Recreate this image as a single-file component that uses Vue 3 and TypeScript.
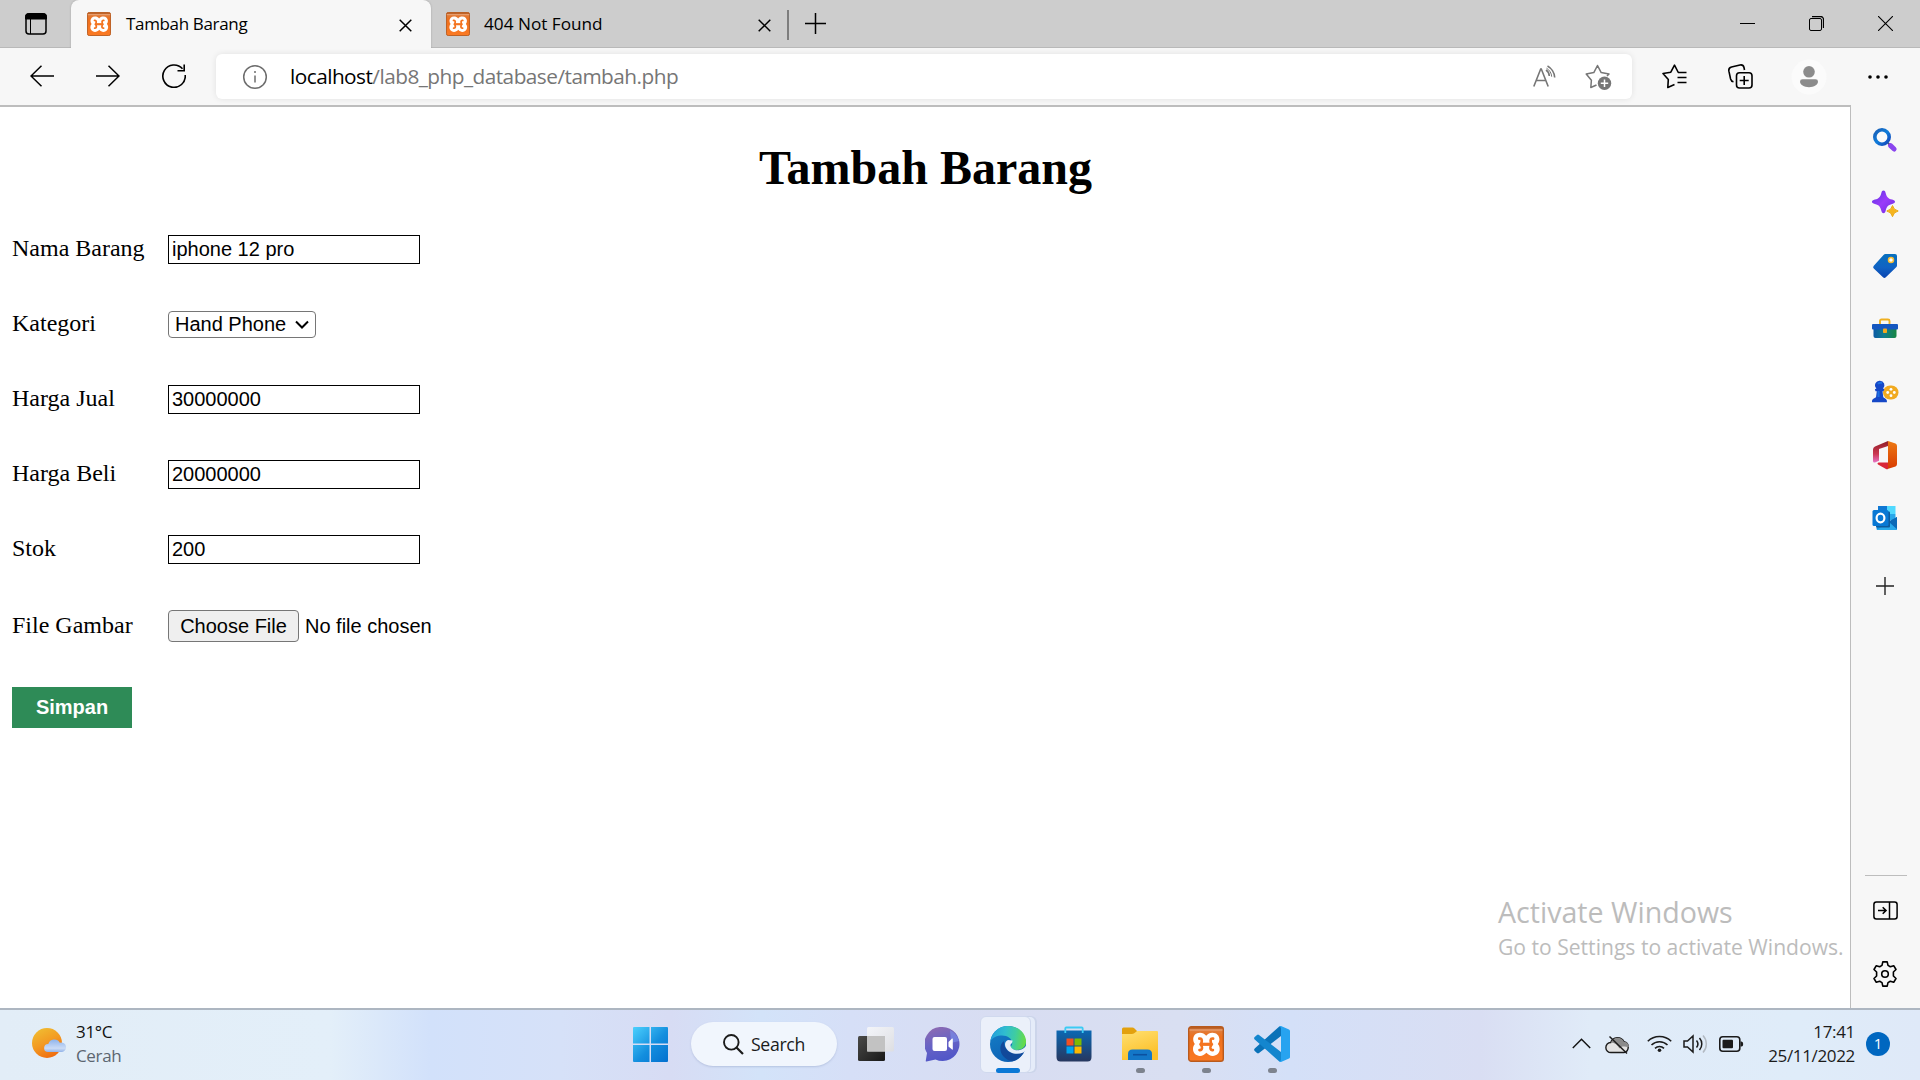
<script setup lang="ts">
import { ref } from 'vue'

interface Field {
  label: string
  value: string
}

const nama = ref<Field>({ label: 'Nama Barang', value: 'iphone 12 pro' })
const numeric = ref<Field[]>([
  { label: 'Harga Jual', value: '30000000' },
  { label: 'Harga Beli', value: '20000000' },
  { label: 'Stok', value: '200' },
])
const kategori = ref('Hand Phone')
</script>

<template>
  <div class="screen">
    <svg class="defs" width="0" height="0" aria-hidden="true">
      <defs>
        <linearGradient id="xo" x1="0" y1="0" x2="0" y2="1">
          <stop offset="0" stop-color="#b3591f" /><stop offset=".06" stop-color="#c4682d" />
          <stop offset=".09" stop-color="#e9a173" /><stop offset=".14" stop-color="#e27a35" />
          <stop offset=".3" stop-color="#ee6f1c" /><stop offset="1" stop-color="#fb7a24" />
        </linearGradient>
        <symbol id="xampp" viewBox="0 0 36 36">
          <rect x=".7" y=".7" width="34.6" height="34.6" rx="2.6" fill="url(#xo)" stroke="#b95a1d" stroke-width="1.4" />
          <path d="M12 6.7c2.7 0 4.5.9 6.2 3 1.700-2.100 3.500-3 6.200-3 4.200 0 7 2.800 7 6.600 0 1.800-.5 3.400-1.600 4.800 1.300 1.400 1.900 3 1.900 4.900 0 3.900-3 6.900-6.900 6.900-2.600 0-4.600-1-6.400-3.100-1.900 2.100-3.800 3.100-6.500 3.100-3.900 0-6.900-3-6.900-6.900 0-1.900.6-3.500 1.900-4.900-1.200-1.400-1.700-3-1.700-4.800 0-3.800 2.700-6.600 6.800-6.600z" fill="#fff" />
          <path d="M11.300 12.600q2.300-.6 2.500 2.200.1 2.500-1.300 3.500 1.600 1 1.500 3.600-.2 2.600-2.500 2.200M25.100 12.600q-2.300-.6-2.500 2.200-.1 2.500 1.300 3.500-1.600 1-1.500 3.600.2 2.600 2.500 2.200" fill="none" stroke="#f47420" stroke-width="2.700" stroke-linecap="round" stroke-linejoin="round" />
          <path d="M12.500 18.300h11.500" stroke="#f47420" stroke-width="3.200" />
        </symbol>
      </defs>
    </svg>

    <header class="tabs">
      <div class="workspace">
        <svg width="22" height="22" viewBox="0 0 22 22"><rect x="1" y="1" width="20" height="20" rx="3" fill="none" stroke="#000" stroke-width="1.500" /><path d="M.5 6V3.500a3 3 0 0 1 3-3h15a3 3 0 0 1 3 3V6zM5.500 6v15" stroke="#000" stroke-width="1" /></svg>
      </div>
      <div class="tab active">
        <svg class="favicon" width="24" height="24"><use href="#xampp" /></svg>
        <span class="ui tabtext">Tambah Barang</span>
        <svg class="x" width="13" height="13" viewBox="0 0 13 13"><path d="M.7.7l11.600 11.600M12.300.7L.7 12.300" stroke="#000" stroke-width="1.500" /></svg>
      </div>
      <div class="tab">
        <svg class="favicon" width="24" height="24"><use href="#xampp" /></svg>
        <span class="ui tabtext second">404 Not Found</span>
        <svg class="x" width="13" height="13" viewBox="0 0 13 13"><path d="M.7.7l11.600 11.600M12.300.7L.7 12.300" stroke="#000" stroke-width="1.500" /></svg>
      </div>
      <i class="sep"></i>
      <svg class="newtab" width="21" height="21" viewBox="0 0 21 21"><path d="M10.500 0v21M0 10.500h21" stroke="#000" stroke-width="1.500" /></svg>
      <div class="winctl">
        <svg width="15" height="15" viewBox="0 0 15 15"><path d="M0 7.500h15" stroke="#000" /></svg>
        <svg width="15" height="15" viewBox="0 0 15 15" fill="none" stroke="#000"><rect x=".5" y="2.500" width="12" height="12" rx="1.500" /><path d="M3 .5h8.500a3 3 0 0 1 3 3V12" stroke-width="1.300" /></svg>
        <svg width="15" height="15" viewBox="0 0 15 15"><path d="M0 0l15 15M15 0L0 15" stroke="#000" stroke-width="1.100" /></svg>
      </div>
    </header>

    <nav class="toolbar">
      <div class="navs">
        <svg width="24" height="22" viewBox="0 0 24 22" fill="none" stroke="#000" stroke-width="1.500"><path d="M24 11H1M11.500.8L1 11l10.500 10.200" /></svg>
        <svg width="24" height="22" viewBox="0 0 24 22" fill="none" stroke="#000" stroke-width="1.500"><path d="M0 11h23M12.500.8L23 11 12.500 21.200" /></svg>
        <svg width="24" height="24" viewBox="0 0 24 24" fill="none" stroke="#000" stroke-width="1.600"><path d="M20.500 4.800A11.200 11.200 0 1 0 23.200 11M22.200.5V6.800H15.500" /></svg>
      </div>
      <div class="address">
        <svg width="26" height="26" viewBox="0 0 26 26" fill="none" stroke="#6d6d6d"><circle cx="13" cy="13" r="11.300" stroke-width="1.500" /><path d="M13 11.500v7" stroke-width="1.500" /><circle cx="13" cy="8" r="1" fill="#6d6d6d" stroke="none" /></svg>
        <span class="ui url"><b>localhost</b>/lab8_php_database/tambah.php</span>
        <svg class="read" width="24" height="23" viewBox="0 0 24 23" fill="none" stroke="#767676" stroke-width="1.600"><path d="M.8 21.500L7.700 4h.6l6.900 17.500M3.300 15.500h9.600M13 5c2 1.300 3.200 3.500 3.300 6M14.500 1c3.800 2.100 7 6.800 7.200 11.500" /><path d="M13.500 3.200c3 1.800 5 4.800 5.200 8.500" stroke-width="1" /></svg>
        <svg class="addfav" width="27" height="27" viewBox="0 0 27 27"><path d="M11.500 21L5.800 23.500 6.400 16.300 1.200 10 8.800 8.600 12.500 1.500 16.200 8.600 24 10 22 12" fill="none" stroke="#767676" stroke-width="1.500" stroke-linejoin="round" /><circle cx="19.500" cy="19.200" r="6.700" fill="#767676" /><path d="M19.500 15.500v7.400M15.800 19.200h7.400" stroke="#fff" stroke-width="1.500" /></svg>
      </div>
      <svg class="fav" width="25" height="25" viewBox="0 0 25 25" fill="none" stroke="#000" stroke-width="1.600" stroke-linejoin="round"><path d="M12.500 20.500L5.800 23.500 6.300 15.600 1 9.500 8.800 8.200 12.500 1.200 16.300 8.500H24.500M15.500 13.500h9M15.500 18.500h9" /></svg>
      <svg class="coll" width="25" height="25" viewBox="0 0 25 25" fill="none" stroke="#000" stroke-width="1.600"><rect x="8.500" y="8.800" width="15.500" height="15.200" rx="3" /><path d="M16.200 12v9M11.700 16.500h9M5.500 17.800C3.500 17.500 3 16.500 2.600 15L.9 7.200C.5 5 1.500 3.500 3.500 3L12 1c2-.4 3.500.5 4 2.500L16.500 6" /></svg>
      <svg class="profile" width="36" height="36" viewBox="0 0 36 36"><circle cx="18" cy="18" r="17.500" fill="#fbfbfb" /><circle cx="18" cy="12.800" r="5.800" fill="#8b8b8b" /><path d="M11.500 20.300h13q2.500 0 2.500 2.300c0 3.300-4 5.600-9 5.600s-9-2.300-9-5.600q0-2.300 2.500-2.300z" fill="#8b8b8b" /></svg>
      <svg class="more" width="20" height="4" viewBox="0 0 20 4"><circle cx="2" cy="2" r="1.800" /><circle cx="10" cy="2" r="1.800" /><circle cx="18" cy="2" r="1.800" /></svg>
    </nav>

    <section class="middle">
      <main class="page">
        <h1>Tambah Barang</h1>
        <form @submit.prevent>
          <div class="row"><label>{{ nama.label }}</label><input v-model="nama.value" type="text" /></div>
          <div class="row">
            <label>Kategori</label>
            <button type="button" class="select">{{ kategori }}<svg width="14" height="9" viewBox="0 0 14 9"><path d="M1 1.500l6 6 6-6" fill="none" stroke="#000" stroke-width="2" /></svg></button>
          </div>
          <div v-for="f in numeric" :key="f.label" class="row"><label>{{ f.label }}</label><input v-model="f.value" type="text" /></div>
          <div class="row filerow"><label>File Gambar</label><button type="button" class="choose">Choose File</button><span class="nofile">No file chosen</span></div>
          <button class="simpan">Simpan</button>
        </form>
        <div class="watermark ui">
          <p class="w1">Activate Windows</p>
          <p class="w2">Go to Settings to activate Windows.</p>
        </div>
      </main>

      <aside class="sidebar">
        <div class="cell">
          <svg width="26" height="26" viewBox="0 0 26 26"><defs><linearGradient id="s1" x2="1" y2="1"><stop stop-color="#1b5fb5" /><stop offset=".5" stop-color="#0f7ddb" /><stop offset="1" stop-color="#1544b8" /></linearGradient></defs><path d="M16 16l3 3" stroke="#555" stroke-width="2" /><path d="M18.500 18.700l3.600 3.300" stroke="#8a45ee" stroke-width="5" stroke-linecap="round" /><circle cx="10" cy="10" r="7.200" fill="#fafafa" stroke="url(#s1)" stroke-width="3.600" /></svg>
        </div>
        <div class="cell">
          <svg width="28" height="28" viewBox="0 0 28 28"><defs><linearGradient id="s2" x2="1" y2="1"><stop stop-color="#5a35e0" /><stop offset=".5" stop-color="#9a3bfa" /><stop offset="1" stop-color="#6b2ee0" /></linearGradient></defs><path d="M12.500 1.500c1.200 0 1.700.8 2.100 2.200 1.100 4.200 2.200 5.800 6.500 6.900 3.900 1 3.900 3.500 0 4.500-4.300 1.100-5.400 2.700-6.500 6.900-.8 3-3.400 3-4.200 0-1.100-4.200-2.200-5.800-6.500-6.900-3.900-1-3.900-3.500 0-4.500 4.300-1.100 5.400-2.700 6.500-6.900.4-1.400.9-2.200 2.100-2.200z" fill="url(#s2)" /><path d="M21.500 16.500q.9 4.500 5.700 5.500-4.800 1-5.700 5.700-.9-4.700-5.700-5.700 4.800-1 5.700-5.500z" fill="#f6b51d" stroke="#eba80e" stroke-width="1" stroke-linejoin="round" /></svg>
        </div>
        <div class="cell">
          <svg width="26" height="26" viewBox="0 0 26 26"><defs><linearGradient id="s3" x2="0" y2="1"><stop stop-color="#0870bd" /><stop offset=".55" stop-color="#1063c4" /><stop offset="1" stop-color="#0a44b0" /></linearGradient></defs><path d="M13.500 1H23q2 0 2 2v9.500q0 1-.8 1.800L13.800 24.300q-1.400 1.400-2.800 0L1.800 15.500q-1.400-1.400 0-2.800L11.500 2q.8-1 2-1z" fill="url(#s3)" /><circle cx="19" cy="7" r="2.500" fill="#fff" stroke="#f7bd32" stroke-width="1.500" /></svg>
        </div>
        <div class="cell">
          <svg width="28" height="22" viewBox="0 0 28 22"><defs><linearGradient id="s4" x2="1" y2="0"><stop stop-color="#0b5aa5" /><stop offset=".45" stop-color="#117d8e" /><stop offset="1" stop-color="#178640" /></linearGradient></defs><path d="M9 6V3q0-1.500 1.500-1.500h6.500Q18.500 1.500 18.500 3v3" fill="none" stroke="#f0b020" stroke-width="1.900" /><path d="M2.500 9h23v9q0 2-2 2h-19q-2 0-2-2z" fill="url(#s4)" /><rect x="1" y="6" width="26" height="5.500" rx="1" fill="#1557c0" /><rect x="12" y="10.500" width="4" height="4.500" rx=".8" fill="#f5a91c" /></svg>
        </div>
        <div class="cell">
          <svg width="28" height="24" viewBox="0 0 28 24"><rect x="12" y="5.500" width="15.500" height="14" rx="7" fill="#f1aa20" /><g fill="#fff"><circle cx="20" cy="9.300" r="1.400" /><circle cx="20" cy="15.700" r="1.400" /><circle cx="16.700" cy="12.500" r="1.400" /><circle cx="23.300" cy="12.500" r="1.400" /></g><path d="M9 .8a4.500 4.500 0 0 1 3.100 7.700l1.200.7-.8 2H11.500l.8 6 2.600 1.800q1 .8 1 2v1.300H1v-1.300q0-1.200 1-2l3-1.800.8-6H4.500l-.6-2 1.500-.7A4.500 4.500 0 0 1 9 .8z" fill="#1648c7" /><path d="M7 4q1.500-2 4-.8M7.500 11v6" stroke="#1d71e2" stroke-width="2" fill="none" /></svg>
        </div>
        <div class="cell">
          <svg width="26" height="30" viewBox="0 0 26 30"><defs><linearGradient id="s6" x2="0" y2="1"><stop stop-color="#ed7913" /><stop offset="1" stop-color="#d83b01" /></linearGradient><linearGradient id="s7" x2="0" y2="1"><stop stop-color="#8f1d25" /><stop offset=".6" stop-color="#cc3852" /><stop offset="1" stop-color="#e875c9" /></linearGradient></defs><path d="M16 1L3 6.500Q1 7.500 1 9.500V21q0 2 2 1.500l4-1.800V9l9-3z" fill="url(#s7)" /><path d="M6.500 22.500H16V29q-1 .5-2 0L6 24.500q-1.500-1 .5-2z" fill="#d92738" /><path d="M16 1l7.500 2.500Q25 4.200 25 6v18q0 1.800-1.500 2.400L15.500 29q.5-.5.5-2z" fill="url(#s6)" /></svg>
        </div>
        <div class="cell">
          <svg width="26" height="26" viewBox="0 0 26 26"><path d="M7 1h16v14H7z" fill="#28a8ea" /><path d="M6 1h9v6H6z" fill="#0f78d4" /><path d="M15 1h8.500v8H15z" fill="#50d9ff" /><path d="M15 9h8.500v6H15z" fill="#28a8ea" /><path d="M4.500 13l13 3L25 12v12q0 1-1 1H6q-1.500 0-1.500-1.500z" fill="#1490df" /><path d="M25 12v12L16 17z" fill="#0b69b7" /><path d="M4.500 25L17 17l8 7.500q-.5.5-1 .5z" fill="#28a8ea" /><rect x="4" y="6.500" width="14" height="16" rx="1" fill="#0c5b9e" /><rect x=".5" y="5" width="16" height="16" rx="1.500" fill="#0878d4" /><ellipse cx="8.500" cy="13" rx="3.900" ry="4.400" fill="none" stroke="#fff" stroke-width="2.200" /></svg>
        </div>
        <div class="cell plus"><svg width="18" height="18" viewBox="0 0 18 18"><path d="M9 0v18M0 9h18" stroke="#222" stroke-width="1.400" /></svg></div>
        <div class="bottom">
          <i></i>
          <div class="cell"><svg width="25" height="19" viewBox="0 0 25 19" fill="none" stroke="#000" stroke-width="1.500"><rect x=".9" y=".9" width="23.200" height="17.200" rx="2.500" /><path d="M16.500 1v17" /><path d="M5 9.500h8M9.700 6.200L13 9.500l-3.300 3.300" stroke-width="1.600" /></svg></div>
          <div class="cell"><svg width="26" height="26" viewBox="0 0 26 26" fill="none" stroke="#000" stroke-width="1.600" stroke-linejoin="round"><path d="M10.800.9h4.400l.8 3.500 2.300 1.300 3.400-1 2.300 3.800L21.400 11v4l2.600 2.500-2.300 3.800-3.400-1L16 21.600l-.8 3.500h-4.400l-.8-3.500-2.300-1.300-3.400 1L2 17.500 4.600 15v-4L2 8.500l2.300-3.800 3.400 1L10 4.400z" /><circle cx="13" cy="13" r="3.300" /></svg></div>
        </div>
      </aside>
    </section>

    <footer class="taskbar">
      <div class="weather">
        <svg width="34" height="31" viewBox="0 0 34 31"><defs><linearGradient id="sun" x1=".2" y1="0" x2=".7" y2="1"><stop stop-color="#f0bd32" /><stop offset=".5" stop-color="#f39a22" /><stop offset="1" stop-color="#ef680d" /></linearGradient><linearGradient id="cl" x2="0" y2="1"><stop stop-color="#8fb4ec" /><stop offset=".7" stop-color="#cbdcf6" /><stop offset="1" stop-color="#91b2e8" /></linearGradient></defs><circle cx="15" cy="15" r="15" fill="url(#sun)" /><path d="M16 24a4 4 0 0 1 .3-8 6.300 6.300 0 0 1 11.500-1.300A4.800 4.800 0 1 1 28.500 24z" fill="url(#cl)" /></svg>
        <div class="ui wtext"><span>31°C</span><span class="dim">Cerah</span></div>
      </div>

      <div class="apps">
        <div class="app start"><svg width="35" height="35" viewBox="0 0 35 35"><defs><linearGradient id="wn" x2="1" y2="1"><stop stop-color="#4cd0fd" /><stop offset=".55" stop-color="#138ede" /><stop offset="1" stop-color="#0370cf" /></linearGradient></defs><path d="M1 0h15.500v16.500H0V1q0-1 1-1zM18 0h16q1 0 1 1v15.500H18zM0 18h16.500v17H1q-1 0-1-1zM18 18h17v16q0 1-1 1H18z" fill="url(#wn)" /></svg></div>
        <div class="search">
          <svg width="21" height="21" viewBox="0 0 21 21" fill="none" stroke="#1b1b1b"><circle cx="8.300" cy="8.300" r="7.300" stroke-width="1.900" /><path d="M13.500 13.500l6.500 6.500" stroke-width="2.200" /></svg>
          <span class="ui">Search</span>
        </div>
        <div class="app taskview"><svg width="36" height="34" viewBox="0 0 36 34"><defs><linearGradient id="tk" x2="1" y2="1"><stop stop-color="#4a4a48" /><stop offset="1" stop-color="#181818" /></linearGradient><linearGradient id="tl" x2="1" y2="1"><stop stop-color="#fafafa" stop-opacity=".8" /><stop offset="1" stop-color="#dedee0" stop-opacity=".9" /></linearGradient></defs><rect y="9" width="27" height="25" rx="1.500" fill="url(#tk)" /><rect x="9" y="0" width="27" height="24.500" rx="1.500" fill="url(#tl)" /><path d="M9 9h18v15.500H9z" fill="#c2c2c2" /></svg></div>
        <div class="app"><svg width="35" height="35" viewBox="0 0 35 35"><defs><linearGradient id="ch" x1=".2" y1="0" x2=".5" y2="1"><stop stop-color="#8f6bb1" /><stop offset=".5" stop-color="#6763c5" /><stop offset="1" stop-color="#5056c8" /></linearGradient></defs><path d="M17.500 0a17 17 0 1 1-7 32.500L1.500 34.500q-1 0-.7-1L2 26A17 17 0 0 1 17.500 0z" fill="url(#ch)" /><path d="M25 3a17 17 0 0 1 9 11l-8 2z" fill="#7d93ed" opacity=".6" /><rect x="7.500" y="10" width="14.500" height="14" rx="2" fill="#fff" /><path d="M23.500 15l3.500-3.500q.8-.4.8.6v10q0 1-.8.5L23.500 19.500z" fill="#fff" /></svg></div>
        <div class="app edge">
          <div class="stack"><svg width="36" height="36" viewBox="0 0 36 36"><defs><linearGradient id="e1" x1="0" y1=".3" x2="1" y2=".4"><stop stop-color="#229ddb" /><stop offset=".4" stop-color="#30bdcf" /><stop offset=".7" stop-color="#3fcda0" /><stop offset="1" stop-color="#68dc45" /></linearGradient><linearGradient id="e2" x2=".5" y2="1"><stop stop-color="#1681c7" /><stop offset="1" stop-color="#0d61b5" /></linearGradient></defs><circle cx="18" cy="18" r="18" fill="url(#e2)" /><path d="M.5 15C2 6 9 0 18 0c10.500 0 18 7.500 18 15.500 0 5.500-4 8.500-9 8.500-4 0-6.500-1.300-6.500-2.800 0-1 1.700-1.500 1.700-4.200 0-4-4.500-7.500-10.200-7.500C7 9.500 2.500 11.500.5 15z" fill="url(#e1)" /><path d="M14 15c-5 3.500-4.500 11-.5 15.500 2.500 2.700 5.500 4.300 9 4.800 4.500-1.200 8.500-4.300 11-8.300.5-1-.3-1.600-1.200-1.100-6 3-14 1.100-17-4.500-1-2-1.600-3.900-1.300-6.400z" fill="#12499a" /><path d="M22.500 14.500c0 3.500-2.200 3.200-2 5 .3 3.200 3.800 5 8 4.700 3.500-.3 5.800-2 7.500-4.200l.4 1V24l-3 2.500c-6.500 2.800-14.500 1-17.400-4.500-2-3.500-.8-7 2-8z" fill="#e9eff9" /></svg></div>
          <i class="run on"></i>
        </div>
        <div class="app"><svg width="36" height="36" viewBox="0 0 36 36"><defs><linearGradient id="st" x2="0" y2="1"><stop stop-color="#0b68b3" /><stop offset="1" stop-color="#27375f" /></linearGradient></defs><path d="M.5 4.500h35V31q0 4.500-4 4.500h-27q-4 0-4-4.500z" fill="url(#st)" /><path d="M9.300 7V2.500q0-1 1-1h15.400q1 0 1 1V7" fill="none" stroke="#3ccbf4" stroke-width="1.800" /><path d="M10.500 12.500h7v7h-7z" fill="#f25022" /><path d="M18.500 12.500h7v7h-7z" fill="#7fba00" /><path d="M10.500 20.500h7v7h-7z" fill="#00a4ef" /><path d="M18.500 20.500h7v7h-7z" fill="#ffb900" /></svg></div>
        <div class="app"><svg width="36" height="34" viewBox="0 0 36 34"><defs><linearGradient id="fo" x2=".4" y2="1"><stop stop-color="#ffe072" /><stop offset="1" stop-color="#fcc029" /></linearGradient></defs><path d="M0 2q0-1.500 1.500-1.500h9q1 0 2 1L15 4v5H0z" fill="#e3a10e" /><path d="M0 7h10q2 0 3.500-1.800Q14.500 4 16 4h19q1 0 1 1v28H0z" fill="url(#fo)" /><path d="M6 33v-6q0-4.500 4.500-4.500h15q4.500 0 4.500 4.500v6z" fill="#1377c8" /><path d="M11 27.700h14" stroke="#0b51a0" stroke-width="1.600" /></svg><i class="run"></i></div>
        <div class="app"><svg width="36" height="36"><use href="#xampp" /></svg><i class="run"></i></div>
        <div class="app"><svg width="36" height="36" viewBox="0 0 36 36"><path d="M27 0v10L5 27q-1 .8-2 0L.7 25q-1.200-1.200 0-2.500L25 .8Q26 0 27 0z" fill="#0a72b8" /><path d="M27 36V26L5 9q-1-.8-2 0L.7 11q-1.200 1.200 0 2.500L25 35.200Q26 36 27 36z" fill="#1486ce" /><path d="M27 0l8 3.500q1 .5 1 1.500v26q0 1-1 1.500L27 36q-1 .3-2-.8 2 .5 2-1.700v-31Q27 .5 25 .8 26-.3 27 0z" fill="#27a3f0" /></svg><i class="run"></i></div>
      </div>

      <div class="tray">
        <svg class="t1" width="19" height="11" viewBox="0 0 19 11"><path d="M.8 10L9.500 1.200 18.200 10" fill="none" stroke="#111" stroke-width="1.400" /></svg>
        <svg class="t2" width="25" height="20" viewBox="0 0 25 20"><path d="M6 17.500a5 5 0 0 1-.3-10A7.200 7.200 0 0 1 19 6.800a5.500 5.500 0 0 1 0 10.700z" fill="#e2e2e2" stroke="#1b1b1b" stroke-width="1.400" /><path d="M6 7.500C8 2 16 .5 19 7c3 0 5 2 4.800 5-3 0-7-2-9.300 1.500-2-4-5-6-8.500-6z" fill="#8b8b8b" /><path d="M4.500 1.500l17.500 17" stroke="#1b1b1b" stroke-width="1.500" /></svg>
        <svg class="t3" width="25" height="19" viewBox="0 0 25 19" fill="none" stroke="#1b1b1b" stroke-width="1.600"><path d="M.8 7.300a16.500 16.500 0 0 1 23.400 0M4.500 11a11.400 11.400 0 0 1 16 0M8 14.300a6.500 6.500 0 0 1 9 0" /><circle cx="12.500" cy="16.300" r="1.800" fill="#1b1b1b" stroke="none" /></svg>
        <svg class="t4" width="25" height="20" viewBox="0 0 25 20" fill="none" stroke="#1b1b1b" stroke-width="1.500"><path d="M1 7h3.500L10 2v16l-5.500-5H1zM13.500 6.500a5.500 5.500 0 0 1 0 7M16.500 4a9 9 0 0 1 0 12" /><path d="M20 1.500a12.500 12.500 0 0 1 0 17" stroke="#b3bac2" /></svg>
        <svg class="t5" width="25" height="16" viewBox="0 0 25 16"><rect x=".8" y=".8" width="20" height="14.400" rx="3" fill="none" stroke="#1b1b1b" stroke-width="1.600" /><rect x="3.500" y="3.700" width="10.500" height="8.600" rx="1" fill="#1b1b1b" /><path d="M21.500 5.500h1q1.700 0 1.700 2.500t-1.700 2.500h-1z" fill="#1b1b1b" /></svg>
        <div class="ui clock"><span class="time">17:41</span><span>25/11/2022</span></div>
        <div class="ui badge">1</div>
      </div>
    </footer>
  </div>
</template>

<style>
body { overflow: hidden; }
</style>

<style scoped>
* { box-sizing: border-box; }
.screen { width: 1920px; height: 1080px; display: flex; flex-direction: column; background: #fff; overflow: hidden; color: #000; }
.defs { position: absolute; }
svg { display: block; flex: none; }
.ui { font-family: "Open Sans", "Noto Sans", sans-serif; white-space: nowrap; letter-spacing: -0.02em; }

.tabs { height: 48px; flex: none; background: #cdcdcd; display: flex; align-items: center; box-shadow: inset 0 -1px 0 #b9b9b9; }
.workspace { width: 71px; padding: 0 0 1px 25px; }
.tab { height: 48px; width: 360px; padding: 0 18px 0 15px; display: flex; align-items: center; }
.tab.active { background: #f7f7f7; border-radius: 8px 8px 0 0; box-shadow: 0 0 2px #9d9d9d; clip-path: inset(0 -3px 0 -3px); padding-left: 16px; padding-right: 19px; }
.tab:not(.active) { width: 356px; padding-right: 16px; }
.tabtext { font-size: 17px; line-height: 24px; margin-left: 15px; flex: 1; padding-bottom: 1px; }
.tabtext.second { margin-left: 14px; font-size: 17.200px; letter-spacing: 0; }
.x { margin-top: 2px; }
.sep { width: 2px; height: 30px; background: #7d7d7d; margin-top: 2px; }
.newtab { margin-left: 16px; margin-top: -1px; }
.winctl { margin-left: auto; padding-right: 27px; display: flex; gap: 54px; margin-top: -1px; }

.toolbar { height: 57px; flex: none; background: #f7f7f7; display: flex; align-items: center; }
.navs { width: 216px; padding: 0 0 1px 30px; display: flex; align-items: center; gap: 42px; }
.address { width: 1416px; height: 45px; background: #fff; border-radius: 6px; display: flex; align-items: center; padding-left: 26px; box-shadow: 0 0 6px rgba(0, 0, 0, .09); }
.url { font-size: 20.800px; line-height: 30px; margin-left: 22px; color: #767676; padding-bottom: 1px; letter-spacing: -0.0255em; }
.url b { font-weight: 400; color: #000; }
.read { margin-left: auto; margin-top: -1px; }
.addfav { margin: 2px 20px 0 28px; }
.fav { margin-left: 30px; }
.coll { margin-left: 41px; }
.profile { margin-left: 38px; }
.more { margin-left: 41px; }

.middle { height: 903px; flex: none; display: flex; background: #f7f7f7; }
.page { width: 1851px; border-top: 2px solid #bdbdbd; border-right: 1px solid #bdbdbd; background: #fff; font-family: "Liberation Serif", serif; font-size: 24px; padding: 0 12px; display: flex; flex-direction: column; }
h1 { font-size: 48px; line-height: 55px; margin: 33px 0 0; text-align: center; font-weight: 700; padding-left: 1px; }
form { padding-top: 17px; }
.row { height: 75px; display: flex; align-items: center; }
.row label { width: 156px; line-height: 27px; padding-bottom: 2px; }
.filerow { height: 78px; }
.row input, .select, .choose, .nofile, .simpan { font-family: "Liberation Sans", Arial, sans-serif; font-size: 20px; line-height: 23px; color: #000; }
.row input { width: 252px; height: 29px; border: 1px solid #000; padding: 0 3px 1px; background: #fff; }
.select { width: 148px; height: 27px; border: 1px solid #767676; border-radius: 4px; background: #fff; padding: 0 6px 1px 6px; display: flex; align-items: center; justify-content: space-between; }
.choose { width: 131px; height: 32px; border: 1px solid #767676; border-radius: 4px; background: #efefef; padding: 1px 0 0; text-align: center; }
.nofile { margin-left: 6px; }
.simpan { display: block; margin-top: 22px; width: 120px; height: 41px; border: 0; background: #2e8b57; color: #fff; font-weight: 700; padding: 0 0 1px; }
.watermark { margin: auto -6px 45px auto; width: 346px; color: #bcbcbc; letter-spacing: 0; }
.watermark p { margin: 0; }
.w1 { font-size: 28.600px; line-height: 38px; }
.w2 { font-size: 21.100px; line-height: 32px; }

.sidebar { width: 69px; padding-top: 3px; display: flex; flex-direction: column; }
.cell { height: 63px; flex: none; display: flex; align-items: center; justify-content: center; padding-right: 1px; }
.plus { margin-top: 5px; }
.bottom { margin-top: auto; padding-bottom: 3px; }
.bottom i { display: block; width: 42px; height: 1px; background: #bdbdbd; margin: 0 0 3px 14px; }

.taskbar { height: 72px; flex: none; border-top: 2px solid #adb6c1; display: flex; background: linear-gradient(90deg, #e2edf7 0, #e3eff9 330px, #d2e1fb 430px, #d6e1f8 560px, #d7dcf4 670px, #d3e3f9 760px, #d6dff7 850px, #d8ddf2 1000px, #d9dff2 1180px, #d4e0f8 1290px, #d9def3 1480px, #e0ebf8 1590px, #dfecf9 1800px, #dfe9f8 1920px); }
.weather { width: 633px; flex: none; padding: 18px 0 0 32px; display: flex; }
.wtext { display: flex; flex-direction: column; font-size: 17px; line-height: 24px; margin: -8px 0 0 10px; color: #111; }
.dim { color: #5c6670; }
.apps { display: flex; }
.app { width: 66px; height: 68px; flex: none; display: flex; align-items: center; justify-content: center; position: relative; }
.app.start { width: 58px; justify-content: flex-start; }
.search { width: 146px; height: 44px; margin-top: 12px; border-radius: 22px; background: #f1f6fd; box-shadow: 0 1px 2px rgba(90, 110, 160, .25); display: flex; align-items: center; padding-left: 32px; }
.search span { font-size: 17.700px; line-height: 26px; margin-left: 7px; color: #1b1b1b; }
.app.taskview { width: 72px; padding-left: 6px; }
.stack { width: 51px; height: 57px; border-radius: 6px; background: #ebf0fa; border: 1px solid #d0d9ee; box-shadow: 5px 0 0 -1px #e5ecf9, 6px 0 0 0 #ccd5ea; display: flex; align-items: center; padding-left: 9px; margin-right: 5px; }
.run { position: absolute; left: 29px; bottom: 5px; width: 9px; height: 5px; border-radius: 3px; background: #7d838e; }
.run.on { left: 21px; width: 24px; background: #0a78d6; }
.tray { margin-left: auto; width: 348px; display: flex; align-items: flex-start; }
.t1 { margin-top: 28px; }
.t2 { margin: 25px 0 0 14px; }
.t3 { margin: 24px 0 0 17px; }
.t4 { margin: 24px 0 0 11px; }
.t5 { margin: 26px 0 0 11px; }
.clock { width: 111px; margin-top: 10px; display: flex; flex-direction: column; align-items: flex-end; font-size: 17px; line-height: 24px; color: #1b1b1b; }
.badge { width: 24px; height: 24px; border-radius: 12px; background: #0067c0; color: #fff; font-size: 15px; line-height: 23px; text-align: center; margin: 22px 0 0 11px; }
</style>
